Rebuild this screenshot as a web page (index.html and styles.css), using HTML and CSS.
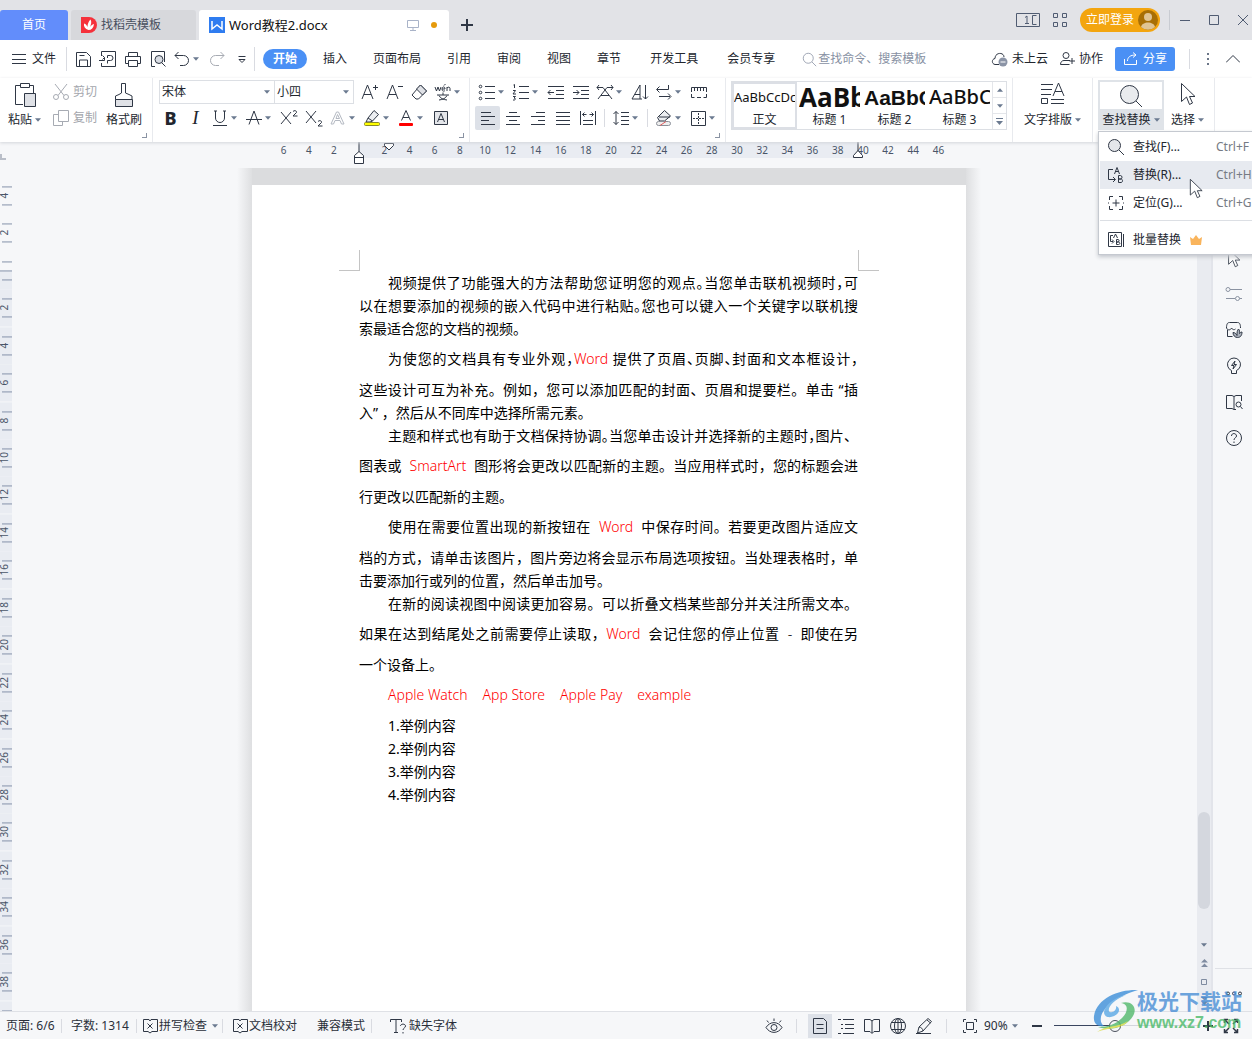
FILE: index.html
```html
<!DOCTYPE html>
<html lang="zh-CN">
<head>
<meta charset="utf-8">
<title>Word教程2.docx</title>
<link rel="stylesheet" href="styles.css">
</head>
<body>
<svg class="defs" aria-hidden="true">
  <symbol id="caret" viewBox="0 0 7 4"><path d="M0 0h7L3.5 4z" fill="#6b7a90" stroke="none"/></symbol>
  <symbol id="save" viewBox="0 0 18 18"><path d="M2.5 2.5h10l4 4v10h-14zM5.500 16v-6h8v6M5.500 5.500h5"/></symbol>
  <symbol id="export" viewBox="0 0 18 18"><path d="M2.500 6V1.500h14v15h-14V13M0 10.500h5.500V7.500M3.500 5.500l2 2-2 2M8.500 8V5.500h3a2 2 0 0 1 0 5H8.500v3"/></symbol>
  <symbol id="print" viewBox="0 0 18 18"><path d="M4.500 6V2.500h9V6M4.500 13.500h-3v-7h15v7h-3M4.500 10.500h9v6h-9z"/></symbol>
  <symbol id="preview" viewBox="0 0 18 18"><path d="M6 16.500H2.500v-15h13V12"/><circle cx="10" cy="9.500" r="4" fill="#d9dde4"/><path d="M13 13l3.500 3.500"/></symbol>
  <symbol id="undo" viewBox="0 0 18 18"><path d="M5.500 2L2 5.500 5.500 9M2 5.500h8.500a5 5 0 0 1 0 10H7"/></symbol>
  <symbol id="redo" viewBox="0 0 18 18"><path d="M12.500 2L16 5.500 12.500 9M16 5.500H7.500a5 5 0 0 0 0 10H11"/></symbol>
  <symbol id="more" viewBox="0 0 18 18"><path d="M5.500 6.500h7M6 9.500h6l-3 3z"/></symbol>
  <symbol id="search" viewBox="0 0 18 18"><circle cx="7.500" cy="7.500" r="6"/><path d="M12 12l5 5"/></symbol>
  <symbol id="cut" viewBox="0 0 18 18"><path d="M3 1l9 11.500M15 1L6 12.500"/><circle cx="4" cy="14" r="2.500"/><circle cx="14" cy="14" r="2.500"/></symbol>
  <symbol id="copy" viewBox="0 0 18 18"><path d="M6.500 1.500h10v11h-10zM6 5.500H1.500v11h9V13"/></symbol>
  <symbol id="paste" viewBox="0 0 24 26"><path d="M7 3.500H2.500v19H10M17 3.500h3.500V11M7.500 1.500h9v4h-9z"/><path d="M11.500 11.500h11v13h-11z" fill="#dfe1e6"/></symbol>
  <symbol id="brush" viewBox="0 0 24 26"><path d="M9.500 11V1.500h4V11l3.500 1.500 3 1.500v3.500H3.500V14L7 12.500z"/><path d="M3.500 17.500h17v7h-17z" fill="#dfe1e6"/></symbol>
  <symbol id="grow" viewBox="0 0 18 18"><path d="M2 16L7.500 2 13 16M4 11.500h7M13 4.500h5M15.500 2v5"/></symbol>
  <symbol id="shrink" viewBox="0 0 18 18"><path d="M2 16L7.500 2 13 16M4 11.500h7M13 3.500h5"/></symbol>
  <symbol id="eraser" viewBox="0 0 18 18"><path d="M10.500 2l6 6-8 8H6l-4-4z"/><path d="M10.500 2l6 6-4 4-6-6z" fill="#dfe1e6"/></symbol>
  <symbol id="pinyin" viewBox="0 0 18 18"><path d="M1 4l1.500 4L4 4l1.500 4L7 4M8 6h3c0-3-3-2.500-3 0s2 2.500 3 1.500M13 8V4m0 1c1-1.500 3-1 3 .5V8M10 2.500L11.500 1M9 9.500V12M3 12h12M5 12.500c1.500 3 4 4 8 4.500M13 12.500c-1.500 3-4 4-8 4.500"/></symbol>
  <symbol id="underline" viewBox="0 0 18 18"><path d="M4.500 2v7a4.500 4.500 0 0 0 9 0V2M3 2h3M12 2h3M2 16.500h14"/></symbol>
  <symbol id="strike" viewBox="0 0 18 18"><path d="M4 15.500L9 2l5 13.500M1 10.500h16"/></symbol>
  <symbol id="sup" viewBox="0 0 18 18"><path d="M1 3l10 12M11 3L1 15M13 2.500c1-1.500 4-1 3.500 1L13 7h4.500"/></symbol>
  <symbol id="sub" viewBox="0 0 18 18"><path d="M1 2l10 12M11 2L1 14M13 12.500c1-1.500 4-1 3.500 1L13 17h4.500"/></symbol>
  <symbol id="effect" viewBox="0 0 18 18"><path d="M2 15L7.500 3h2L15 15h-2.500l-1.500-3.500H6L4.500 15zM7 9.500h3.500L8.500 5.500z" stroke="#b4b9c2"/></symbol>
  <symbol id="mark" viewBox="0 0 18 18"><path d="M5 9l6-7.500 4.500 4L9.500 12zM5 9l-2 4h4l2.500-1" fill="#eceef1"/><rect x="1.500" y="13.500" width="15" height="3" rx="1" fill="#ff0" stroke="#8a8a2a"/></symbol>
  <symbol id="color" viewBox="0 0 18 18"><path d="M4.500 11.500L9 1.500l4.500 10M6 8.500h6"/><rect x="2" y="14" width="14" height="3" rx="1" fill="red" stroke="none"/></symbol>
  <symbol id="boxa" viewBox="0 0 18 18"><path d="M2.500 2.500h13v13h-13z" fill="#e4e6ea"/><path d="M5.500 13L9 4.500l3.500 8.500M6.500 10.500h5"/></symbol>
  <symbol id="bullets" viewBox="0 0 18 18"><path d="M7 3.500h10M7 9.500h10M7 15.500h10"/><circle cx="2.500" cy="3.500" r="1.300"/><circle cx="2.500" cy="9.500" r="1.300"/><circle cx="2.500" cy="15.500" r="1.300"/></symbol>
  <symbol id="numbers" viewBox="0 0 18 18"><path d="M7 3.500h10M7 9.500h10M7 15.500h10M1.500 2l1-.5V5M1 7.500h2.500L1 11h3M1 13.500h2.500l-1.500 1.500c2 0 2 2.500-1 2"/></symbol>
  <symbol id="outdent" viewBox="0 0 18 18"><path d="M1 3.500h16M9 7.500h8M9 11.500h8M1 15.500h16M7 9.500H1M3.500 7L1 9.500 3.500 12"/></symbol>
  <symbol id="indent" viewBox="0 0 18 18"><path d="M1 3.500h16M9 7.500h8M9 11.500h8M1 15.500h16M1 9.500h6M4.500 7L7 9.500 4.500 12"/></symbol>
  <symbol id="scale" viewBox="0 0 18 18"><path d="M2 16L9 7l7 9M5 12.500h8M7 4.500H1M3 2L1 4.500 3 7M11 4.500h6M15 2l2 2.500L15 7M7 4.500l2 2.500 2-2.500"/></symbol>
  <symbol id="sort" viewBox="0 0 18 18"><path d="M1 16L9 2v14M4 11.500h5M1 16h10M14.500 2v14M12 13.500l2.500 2.500 2.500-2.500"/></symbol>
  <symbol id="wrap" viewBox="0 0 18 18"><path d="M13.500 2v4.500H2M4.500 3.500l-3 3 3 3M4 13.500h11M13 10.500l3 3-3 3"/></symbol>
  <symbol id="tabs" viewBox="0 0 18 18"><path d="M1.500 9V4.500h15V9M4.500 5v3M7.500 5v3M10.500 5v3M13.500 5v3M1.500 11v3.500h3M16.500 11v3.500h-3M7 14.500h4"/></symbol>
  <symbol id="left" viewBox="0 0 18 18"><path d="M2 3.500h10M2 7.500h14M2 11.500h8M2 15.500h14"/></symbol>
  <symbol id="center" viewBox="0 0 18 18"><path d="M5 3.500h8M2 7.500h14M5 11.500h8M2 15.500h14"/></symbol>
  <symbol id="right" viewBox="0 0 18 18"><path d="M7 3.500h9M2 7.500h14M9 11.500h7M2 15.500h14"/></symbol>
  <symbol id="justify" viewBox="0 0 18 18"><path d="M2 3.500h14M2 7.500h14M2 11.500h14M2 15.500h14"/></symbol>
  <symbol id="spread" viewBox="0 0 18 18"><path d="M1.500 2v14M16.500 2v14M4 11.500h10M4 15.500h10M3.500 5.500h4M5.500 3.500l-2 2 2 2M14.500 5.500h-4M12.500 3.500l2 2-2 2"/></symbol>
  <symbol id="spacing" viewBox="0 0 18 18"><path d="M4 2.500v13M1.500 5L4 2.500 6.500 5M1.500 13L4 15.500 6.500 13M9 3.500h8M9 7.500h8M9 11.500h8M9 15.500h8"/></symbol>
  <symbol id="shade" viewBox="0 0 18 18"><path d="M9.500 1.500l6 5.500-6 5h-5l-2-3.500zM4 8h11" fill="#eceef1"/><rect x="1.500" y="12.500" width="14" height="4" rx="2" fill="#eee" stroke="#8b8f98"/><path d="M5 16.500l6-4" stroke="#e06060"/></symbol>
  <symbol id="border" viewBox="0 0 18 18"><path d="M2.500 2.500h14v14h-14z"/><path d="M9.500 4v11M4 9.500h11" stroke-dasharray="2 1"/></symbol>
  <symbol id="typeset" viewBox="0 0 26 24"><path d="M2 2.500h12M2 7.500h11M2 12.500h10M2.500 16.500h6v5h-6zM12 17.500h13M12 21.500h13M14 14l5.500-13L25 14M16 9.500h7"/></symbol>
  <symbol id="find" viewBox="0 0 24 24"><circle cx="10.500" cy="10.500" r="9" fill="#e9ebee"/><path d="M17 17l6 6"/></symbol>
  <symbol id="pointer" viewBox="0 0 16 24"><path d="M1.500 1.500v18l5-4.500 3 7.500 3-1.500-3-6.500h5.500z" fill="#fff"/></symbol>
  <symbol id="replace" viewBox="0 0 18 18"><path d="M6 3.500H1.500v10H8M6 11l2.500 2.500L6 16M7.500 8L10 1.500 12.500 8M8.500 5.500h3M11.500 9.500v7h2.500c2 0 2-3.500 0-3.500h-2.500 2c2 0 2-3.500 0-3.500z"/></symbol>
  <symbol id="locate" viewBox="0 0 18 18"><path d="M6 2.500H2.500V6M12 2.500h3.500V6M6 15.500H2.500V12M12 15.500h3.500V12M9 5.500v7M5.500 9h7M1 9h1M16 9h1"/></symbol>
  <symbol id="batch" viewBox="0 0 18 18"><path d="M1.500 1.500h13v14h-13zM16.500 3v13M6 4.500H3.500v6H6M5 8.500l2 2-2 2M6.500 7L8.500 3l2 4M9.500 8.500v5h2c2 0 1.500-2.500 0-2.500h-2 1.500c1.500 0 1.500-2.500 0-2.500z"/></symbol>
  <symbol id="sliders" viewBox="0 0 18 18"><path d="M5 4.500h12M1 13.500h9M14.500 13.500H17" stroke="#8b93a2"/><circle cx="3" cy="4.500" r="2" stroke="#8b93a2"/><circle cx="12.500" cy="13.500" r="2" stroke="#8b93a2"/></symbol>
  <symbol id="store" viewBox="0 0 18 18"><path d="M2.500 9v6.500h5M1.500 7c0-4 1-5.500 3-5.500h8c2 0 3 1.500 3 5.500M1.500 7c1 2.500 4 2.500 5 0M6.500 7c1 2 3 2 4 1"/><path d="M8 11.500c2 0 3 1 4 3 0-3 0-5 1.500-6.500 1.500 1.500 1 3 1 4.500 1-1 1.500-1.500 2.500-1.500 0 4-2 5.500-4.500 5.500S8 14.500 8 11.500z" fill="#aab0bb"/></symbol>
  <symbol id="bulb" viewBox="0 0 18 18"><path d="M6.500 16.500v-3a6.500 6.500 0 1 1 5 0v3zM10 4L6.500 8.500h2.500L8 12l3.500-4.500H9z"/></symbol>
  <symbol id="read" viewBox="0 0 18 18"><path d="M16.500 8V2.500H11L9 3.500 7 2.500H1.500v13H7l2 1V3.500M9 16.500h2"/><circle cx="13.500" cy="11.500" r="2.500"/><path d="M15.500 13.500l2 2.500"/></symbol>
  <symbol id="help" viewBox="0 0 18 18"><circle cx="9" cy="9" r="7.500"/><path d="M6.500 7c0-3.500 5-3 5 0 0 2-2.500 1.500-2.500 4M9 12.500V14"/></symbol>
  <symbol id="proof" viewBox="0 0 18 18"><path d="M8 2.500H2.500v12H7l2 1.500 2-1.500h5.500v-12H10L9 4zM6.500 6.500l5 5M11.500 6.500l-5 5"/></symbol>
  <symbol id="missing" viewBox="0 0 18 18"><path d="M1.500 5V2.500h11V5M7 2.500v13M5 15.500h4M11.500 9c0-2.500 5-2.500 5 0 0 2-2.500 2-2.500 4M14 15v1.500"/></symbol>
  <symbol id="eye" viewBox="0 0 18 18"><path d="M1 10.500c4-6.500 12-6.500 16 0-4 6.500-12 6.500-16 0zM9 4V1.500M3.500 5.500L2 3.500M14.500 5.500L16 3.500"/><circle cx="9" cy="10.500" r="3"/></symbol>
  <symbol id="pageview" viewBox="0 0 18 18"><path d="M2.500 1.500h10l3 3v12h-13zM5.500 7.500h7M5.500 11.500h7"/></symbol>
  <symbol id="outline" viewBox="0 0 18 18"><path d="M1 2.500h3M6 2.500h11M4 7.500h2M8 7.500h9M4 11.500h2M8 11.500h9M1 16.500h3M6 16.500h11"/></symbol>
  <symbol id="book" viewBox="0 0 18 18"><path d="M1.500 2.500H7L9 4l2-1.500h5.500v12H11l-2 2-2-2H1.500zM9 4v12"/></symbol>
  <symbol id="globe" viewBox="0 0 18 18"><circle cx="9" cy="9" r="7.500"/><ellipse cx="9" cy="9" rx="3.500" ry="7.500"/><path d="M9 1.500v15M2.500 5.500h13M2.500 12.500h13"/></symbol>
  <symbol id="pen" viewBox="0 0 18 18"><path d="M4 10l9-8.500 3.500 3L8 14l-5.500 2zM4 10c2 0 4 2 4 4M1 16.500h15M12 3l3.500 3"/></symbol>
  <symbol id="fit" viewBox="0 0 18 18"><path d="M5 2.500H2.500V5M13 2.500h2.500V5M5 15.500H2.500V13M13 15.500h2.500V13M5.500 5.500h7v7h-7z"/></symbol>
  <symbol id="full" viewBox="0 0 18 18"><path d="M6 2.500H2.500V6M12 2.500h3.500V6M6 15.500H2.500V12M12 15.500h3.500V12M3 3l4 4M15 3l-4 4M3 15l4-4M15 15l-4-4" stroke-width="1.500"/></symbol>
</svg>

<header class="titlebar">
  <nav class="tabs">
    <button class="tab tab-home">首页</button>
    <button class="tab tab-tpl"><svg width="16" height="16" viewBox="0 0 16 16"><path d="M0 0h8a8 8 0 0 1 0 16H0z" fill="#f5313b" stroke="none"/><path d="M7.500 13C4 12 2.500 9.500 3 6.500c2 .5 3 2 3.500 3.500C6.500 7 7.500 4.500 9.500 2.500 11 5 10 7.500 9 10c1-1.500 2-2.500 4-3-.5 4-2.500 6-5.500 6z" fill="#fff" stroke="none"/></svg>找稻壳模板</button>
    <button class="tab tab-doc"><svg width="16" height="16" viewBox="0 0 16 16"><path d="M0 0h16v16H0z" fill="#2f7cf0" stroke="none"/><path d="M3 4v8l5-4 5 4V4" stroke="#fff" stroke-width="1.500"/></svg><span>Word教程2.docx</span><svg class="screen" width="12" height="12" viewBox="0 0 12 12"><path d="M.5 1.500h11v7H.5zM6 9v2.500M3 11.500h6"/></svg><i class="dirty"></i></button>
    <button class="add" aria-label="新建"><svg width="12" height="12" viewBox="0 0 12 12"><path d="M6 0v12M0 6h12" stroke-width="2"/></svg></button>
  </nav>
  <div class="window-tools">
    <svg width="24" height="14" viewBox="0 0 24 14"><path d="M.5.5h23v13H.5zM20.500 2.500h-4v9h4M9 4.500L11 3v7.500M9 10.500h4"/></svg>
    <svg width="14" height="14" viewBox="0 0 14 14"><path d="M.5.500h4v4h-4zM9.500.500h4v4h-4zM.5 9.500h4v4h-4zM9.500 9.500h4v4h-4z"/></svg>
    <button class="login">立即登录<svg width="20" height="20" viewBox="0 0 20 20"><circle cx="10" cy="10" r="10" fill="#a86f05" stroke="none"/><circle cx="10" cy="7" r="4" fill="#e0c493" stroke="none"/><path d="M3 17c1-6 13-6 14 0a10 10 0 0 1-14 0z" fill="#e0c493" stroke="none"/></svg></button>
    <i class="vr"></i>
    <svg width="10" height="10" viewBox="0 0 10 10"><path d="M0 5.500h10"/></svg>
    <svg width="10" height="10" viewBox="0 0 10 10"><path d="M.5.500h9v9h-9z"/></svg>
    <svg width="10" height="10" viewBox="0 0 10 10"><path d="M0 0l10 10M10 0L0 10"/></svg>
  </div>
</header>

<div class="menubar">
  <button class="file"><svg width="14" height="12" viewBox="0 0 14 12"><path d="M0 1.500h14M0 6.500h14M0 10.500h14"/></svg>文件</button>
  <i class="vr"></i>
  <button class="btn" aria-label="保存"><svg class="ic"><use href="#save"/></svg></button>
  <button class="btn" aria-label="输出为PDF"><svg class="ic"><use href="#export"/></svg></button>
  <button class="btn" aria-label="打印"><svg class="ic"><use href="#print"/></svg></button>
  <button class="btn" aria-label="打印预览"><svg class="ic"><use href="#preview"/></svg></button>
  <button class="btn split" aria-label="撤销"><svg class="ic"><use href="#undo"/></svg><svg class="caret"><use href="#caret"/></svg></button>
  <button class="btn dim" aria-label="恢复"><svg class="ic"><use href="#redo"/></svg></button>
  <button class="btn" aria-label="更多"><svg class="ic"><use href="#more"/></svg></button>
  <i class="vr"></i>
  <nav class="menus">
    <button class="current">开始</button><button>插入</button><button>页面布局</button><button>引用</button><button>审阅</button><button>视图</button><button>章节</button><button class="far">开发工具</button><button class="far">会员专享</button>
  </nav>
  <label class="search"><svg width="15" height="15"><use href="#search"/></svg><input type="text" placeholder="查找命令、搜索模板" aria-label="查找命令"></label>
  <div class="account">
    <button><svg width="17" height="16" viewBox="0 0 17 16"><path d="M8 13.500H4C.5 13 .5 8 4 7.500 4 1 13 1 13 6"/><circle cx="12" cy="11" r="4.500" fill="#8b94a6" stroke="none"/><path d="M9.500 11h5" stroke="#fff"/></svg>未上云</button>
    <button><svg width="15" height="16" viewBox="0 0 15 16"><circle cx="6" cy="4.500" r="3"/><path d="M10 9.500H4c-2 0-3.500 1.500-3.500 4h9M12 7v6M9.500 10h5.500"/></svg>协作</button>
    <button class="share"><svg width="14" height="14" viewBox="0 0 14 14"><path d="M.5 7v5.500h12V8M3.500 9c0-4 3-6 8-6M9 .500L12 3 9 5.500"/></svg>分享</button>
    <i class="vr"></i>
    <svg width="4" height="14" viewBox="0 0 4 14"><path d="M1 1h2v2H1zM1 6h2v2H1zM1 11h2v2H1z" fill="#6b7688" stroke="none"/></svg>
    <svg width="14" height="8" viewBox="0 0 14 8"><path d="M0 7.500l7-7 7 7"/></svg>
  </div>
</div>

<div class="ribbon">
  <section class="group clip">
    <button class="big"><svg width="24" height="26"><use href="#paste"/></svg><span>粘贴<svg class="caret"><use href="#caret"/></svg></span></button>
    <div class="stack">
      <button class="text dim"><svg class="ic"><use href="#cut"/></svg>剪切</button>
      <button class="text dim"><svg class="ic"><use href="#copy"/></svg>复制</button>
    </div>
    <button class="big"><svg width="24" height="26"><use href="#brush"/></svg><span>格式刷</span></button>
    <i class="launch"></i>
  </section>
  <section class="group font">
    <div class="row">
      <div class="pick pick-font"><select aria-label="字体"><option>宋体</option></select><svg class="caret"><use href="#caret"/></svg></div>
      <div class="pick pick-size"><select aria-label="字号"><option>小四</option></select><svg class="caret"><use href="#caret"/></svg></div>
      <span class="tools">
        <button class="btn" aria-label="增大字号"><svg class="ic"><use href="#grow"/></svg></button>
        <button class="btn" aria-label="减小字号"><svg class="ic"><use href="#shrink"/></svg></button>
        <button class="btn" aria-label="清除格式"><svg class="ic"><use href="#eraser"/></svg></button>
        <button class="btn split" aria-label="拼音指南"><svg class="ic"><use href="#pinyin"/></svg><svg class="caret"><use href="#caret"/></svg></button>
      </span>
    </div>
    <div class="row">
      <button class="btn bold">B</button>
      <button class="btn italic">I</button>
      <button class="btn split" aria-label="下划线"><svg class="ic"><use href="#underline"/></svg><svg class="caret"><use href="#caret"/></svg></button>
      <button class="btn split" aria-label="删除线"><svg class="ic"><use href="#strike"/></svg><svg class="caret"><use href="#caret"/></svg></button>
      <button class="btn" aria-label="上标"><svg class="ic"><use href="#sup"/></svg></button>
      <button class="btn" aria-label="下标"><svg class="ic"><use href="#sub"/></svg></button>
      <button class="btn split" aria-label="文字效果"><svg class="ic"><use href="#effect"/></svg><svg class="caret"><use href="#caret"/></svg></button>
      <button class="btn split" aria-label="突出显示"><svg class="ic"><use href="#mark"/></svg><svg class="caret"><use href="#caret"/></svg></button>
      <button class="btn split" aria-label="字体颜色"><svg class="ic"><use href="#color"/></svg><svg class="caret"><use href="#caret"/></svg></button>
      <button class="btn" aria-label="字符底纹"><svg class="ic"><use href="#boxa"/></svg></button>
    </div>
    <i class="launch"></i>
  </section>
  <section class="group para">
    <div class="row">
      <button class="btn split" aria-label="项目符号"><svg class="ic"><use href="#bullets"/></svg><svg class="caret"><use href="#caret"/></svg></button>
      <button class="btn split" aria-label="编号"><svg class="ic"><use href="#numbers"/></svg><svg class="caret"><use href="#caret"/></svg></button>
      <button class="btn" aria-label="减少缩进"><svg class="ic"><use href="#outdent"/></svg></button>
      <button class="btn" aria-label="增加缩进"><svg class="ic"><use href="#indent"/></svg></button>
      <button class="btn split" aria-label="中文版式"><svg class="ic"><use href="#scale"/></svg><svg class="caret"><use href="#caret"/></svg></button>
      <button class="btn" aria-label="排序"><svg class="ic"><use href="#sort"/></svg></button>
      <button class="btn split" aria-label="显示段落标记"><svg class="ic"><use href="#wrap"/></svg><svg class="caret"><use href="#caret"/></svg></button>
      <button class="btn" aria-label="制表位"><svg class="ic"><use href="#tabs"/></svg></button>
    </div>
    <div class="row">
      <button class="btn on" aria-label="左对齐"><svg class="ic"><use href="#left"/></svg></button>
      <button class="btn" aria-label="居中"><svg class="ic"><use href="#center"/></svg></button>
      <button class="btn" aria-label="右对齐"><svg class="ic"><use href="#right"/></svg></button>
      <button class="btn" aria-label="两端对齐"><svg class="ic"><use href="#justify"/></svg></button>
      <button class="btn" aria-label="分散对齐"><svg class="ic"><use href="#spread"/></svg></button>
      <i class="vr"></i>
      <button class="btn split" aria-label="行距"><svg class="ic"><use href="#spacing"/></svg><svg class="caret"><use href="#caret"/></svg></button>
      <i class="vr"></i>
      <button class="btn split" aria-label="底纹颜色"><svg class="ic"><use href="#shade"/></svg><svg class="caret"><use href="#caret"/></svg></button>
      <button class="btn split" aria-label="边框"><svg class="ic"><use href="#border"/></svg><svg class="caret"><use href="#caret"/></svg></button>
    </div>
    <i class="launch"></i>
  </section>
  <section class="group styles">
    <div class="gallery">
      <button class="style chosen"><b class="s0">AaBbCcDc</b><span>正文</span></button>
      <button class="style"><b class="s1">AaBb</b><span>标题 1</span></button>
      <button class="style"><b class="s2">AaBbC</b><span>标题 2</span></button>
      <button class="style"><b class="s3">AaBbC</b><span>标题 3</span></button>
      <div class="scroller"><button aria-label="上一行"><svg class="tiny flip"><use href="#caret"/></svg></button><button aria-label="下一行"><svg class="tiny"><use href="#caret"/></svg></button><button aria-label="全部样式"><svg width="7" height="7" viewBox="0 0 7 7"><path d="M0 .500h7" stroke="#6b7a90"/><path d="M0 3h7L3.500 7z" fill="#6b7a90" stroke="none"/></svg></button></div>
    </div>
  </section>
  <section class="group layout">
    <button class="big"><svg width="26" height="24"><use href="#typeset"/></svg><span>文字排版<svg class="caret"><use href="#caret"/></svg></span></button>
  </section>
  <section class="group edit">
    <div class="findwrap">
      <button class="big find"><i class="lens"><svg width="24" height="24"><use href="#find"/></svg></i><span>查找替换<svg class="caret"><use href="#caret"/></svg></span></button>
      <div class="menu" role="menu">
        <button role="menuitem"><svg class="ic glass"><use href="#search"/></svg><span>查找(F)...</span><kbd>Ctrl+F</kbd></button>
        <button role="menuitem" class="hover"><svg class="ic"><use href="#replace"/></svg><span>替换(R)...</span><kbd>Ctrl+H</kbd></button>
        <button role="menuitem"><svg class="ic"><use href="#locate"/></svg><span>定位(G)...</span><kbd>Ctrl+G</kbd></button>
        <hr>
        <button role="menuitem"><svg class="ic"><use href="#batch"/></svg><span>批量替换</span><svg class="crown" width="12" height="10" viewBox="0 0 12 10"><path d="M0 2l3 2 3-4 3 4 3-2-1 8H1z" fill="#f9b45c" stroke="none"/></svg></button>
        <svg class="mouse" width="14" height="21"><use href="#pointer"/></svg>
      </div>
    </div>
    <button class="big"><svg width="16" height="24"><use href="#pointer"/></svg><span>选择<svg class="caret"><use href="#caret"/></svg></span></button>
  </section>
</div>

<main class="work">
  <div class="desk">
    <div class="ruler">
      <i class="corner"></i>
      <ol>
        <li>6<li>4<li>2<li><li>2<li>4<li>6<li>8<li>10<li>12<li>14<li>16<li>18<li>20<li>22<li>24<li>26<li>28<li>30<li>32<li>34<li>36<li>38<li>40<li>42<li>44<li>46
        <svg class="first" width="12" height="8" viewBox="0 0 12 8"><path d="M1.500 .500h9v2L6 7l-4.500-4.500z" fill="#fff"/></svg>
        <svg class="hang" width="10" height="22" viewBox="0 0 10 22"><path d="M5 0v10"/><path d="M.500 21.500v-8L5 9.500l4.500 4v8zM.500 15.500h9" fill="#fff"/></svg>
        <svg class="rind" width="10" height="16" viewBox="0 0 10 16"><path d="M5 0v10"/><path d="M.500 15.500v-2L5 8.500l4.500 5v2z" fill="#fff"/></svg>
      </ol>
    </div>
    <div class="canvas">
      <ol class="vruler">
        <li>4<li>2<li class="zero"><li>2<li>4<li>6<li>8<li>10<li>12<li>14<li>16<li>18<li>20<li>22<li>24<li>26<li>28<li>30<li>32<li>34<li>36<li>38<li>40
      </ol>
      <div class="sheet">
        <article class="paper">
          <div class="crops"><i></i><i></i></div>
          <div class="body">
            <p><span class="ln in">视频提供了功能强大的方法帮助您证明您的观点<s>。</s>当您单击联机视频时<s>，</s>可</span><span class="ln">以在想要添加的视频的嵌入代码中进行粘贴<s>。</s>您也可以键入一个关键字以联机搜</span><span class="ln end">索最适合您的文档的视频。</span></p>
            <p><span class="ln in tall">为使您的文档具有专业外观<s>，</s><em>Word</em> 提供了页眉<s>、</s>页脚<s>、</s>封面和文本框设计<s>，</s></span><span class="ln">这些设计可互为补充。例如，您可以添加匹配的封面、页眉和提要栏。单击 “插</span><span class="ln end">入” ，然后从不同库中选择所需元素。</span></p>
            <p><span class="ln in">主题和样式也有助于文档保持协调<s>。</s>当您单击设计并选择新的主题时<s>，</s>图片、</span><span class="ln tall">图表或 <em class="pad">SmartArt</em> 图形将会更改以匹配新的主题。当应用样式时，您的标题会进</span><span class="ln end">行更改以匹配新的主题。</span></p>
            <p><span class="ln in tall">使用在需要位置出现的新按钮在 <em class="pad">Word</em> 中保存时间。若要更改图片适应文</span><span class="ln">档的方式，请单击该图片，图片旁边将会显示布局选项按钮。当处理表格时，单</span><span class="ln end">击要添加行或列的位置，然后单击加号。</span></p>
            <p><span class="ln in">在新的阅读视图中阅读更加容易。可以折叠文档某些部分并关注所需文本。</span><span class="ln tall">如果在达到结尾处之前需要停止读取，<em class="after">Word</em> 会记住您的停止位置 <em class="dash">-</em> 即使在另</span><span class="ln end">一个设备上。</span></p>
            <p class="ln in tall end names"><em>Apple Watch</em><em>App Store</em><em>Apple Pay</em><em>example</em></p>
            <p class="ln in end">1.举例内容</p>
            <p class="ln in end">2.举例内容</p>
            <p class="ln in end">3.举例内容</p>
            <p class="ln in end">4.举例内容</p>
          </div>
        </article>
      </div>
    </div>
  </div>
  <div class="scroll">
    <i class="thumb"></i>
    <svg class="tiny"><use href="#caret"/></svg>
    <svg width="7" height="8" viewBox="0 0 7 8"><path d="M0 3.500L3.500 0 7 3.500zM0 8l3.500-3.500L7 8z" fill="#7f8ba0" stroke="none"/></svg>
    <svg width="6" height="6" viewBox="0 0 6 6"><path d="M.5.500h5v5h-5z" stroke="#7f8ba0"/></svg>
    <svg width="7" height="8" viewBox="0 0 7 8"><path d="M0 0h7L3.500 3.500zM0 4.500h7L3.500 8z" fill="#7f8ba0" stroke="none"/></svg>
  </div>
  <aside class="side">
    <button aria-label="选择"><svg width="14" height="20"><use href="#pointer"/></svg></button>
    <button aria-label="属性"><svg class="ic"><use href="#sliders"/></svg></button>
    <button aria-label="稻壳"><svg class="ic"><use href="#store"/></svg></button>
    <button aria-label="推荐"><svg class="ic"><use href="#bulb"/></svg></button>
    <button aria-label="查阅"><svg class="ic"><use href="#read"/></svg></button>
    <button aria-label="帮助"><svg class="ic"><use href="#help"/></svg></button>
    <button class="dots" aria-label="更多"><svg width="16" height="5" viewBox="0 0 16 5"><circle cx="2" cy="2.500" r="1.500"/><circle cx="8" cy="2.500" r="1.500"/><circle cx="14" cy="2.500" r="1.500"/></svg></button>
  </aside>
</main>

<footer class="status">
  <span class="page-no">页面: 6/6</span><i class="vr"></i>
  <span class="words">字数: 1314</span><i class="vr"></i>
  <button class="spell"><svg class="ic"><use href="#proof"/></svg>拼写检查<svg class="caret"><use href="#caret"/></svg></button><i class="vr"></i>
  <button class="check"><svg class="ic"><use href="#proof"/></svg>文档校对</button>
  <span class="compat">兼容模式</span><i class="vr"></i>
  <button class="missing"><svg class="ic"><use href="#missing"/></svg>缺失字体</button>
  <div class="views">
    <button aria-label="护眼模式"><svg class="ic"><use href="#eye"/></svg></button>
    <i class="vr wide"></i>
    <button class="on" aria-label="页面视图"><svg class="ic"><use href="#pageview"/></svg></button>
    <button aria-label="大纲"><svg class="ic"><use href="#outline"/></svg></button>
    <button aria-label="阅读版式"><svg class="ic"><use href="#book"/></svg></button>
    <button aria-label="Web版式"><svg class="ic"><use href="#globe"/></svg></button>
    <button aria-label="写作模式"><svg class="ic"><use href="#pen"/></svg></button>
    <i class="vr wide"></i>
    <button aria-label="适合页面"><svg class="ic"><use href="#fit"/></svg></button>
    <button class="pct">90%<svg class="caret"><use href="#caret"/></svg></button>
    <button class="step" aria-label="缩小"><svg width="10" height="10" viewBox="0 0 10 10"><path d="M0 5h10" stroke-width="2"/></svg></button>
    <input type="range" min="0" max="100" value="41" aria-label="缩放">
    <button class="step" aria-label="放大"><svg width="10" height="10" viewBox="0 0 10 10"><path d="M0 5h10M5 0v10" stroke-width="2"/></svg></button>
    <button aria-label="全屏"><svg class="ic"><use href="#full"/></svg></button>
  </div>
</footer>

<div class="watermark">
  <svg width="46" height="44" viewBox="0 0 46 44">
    <path d="M45 1C28 0 4 8 1 27c-1 8 4 11 10 10C3 32 8 12 45 1z" fill="#3d8fd9" stroke="none"/>
    <path d="M33 6C20 9 11 17 11 24c1 6 10 5 14 0 2-3 1-6-2-7 1 4-3 7-6 6-4-2 2-12 16-17z" fill="#5aa9e6" stroke="none"/>
    <path d="M28 14c8 1 7 9 1 15-6 6-14 9-24 9 14 5 31-1 36-13 3-8-4-14-13-11z" fill="#52b96b" stroke="none"/>
    <path d="M4 43c10-7 20-4 31-11-6 9-20 6-31 11z" fill="#d8dc3f" stroke="none"/>
  </svg>
  <div><strong>极光下载站</strong><span>www.xz7.com</span></div>
</div>
</body>
</html>
```
FILE: styles.css
```css
* { box-sizing: border-box; }
html, body { height: 100%; }
body {
  margin: 0;
  display: flex;
  flex-direction: column;
  overflow: hidden;
  position: relative;
  background: #f6f7f9;
  color: #22262e;
  font: 12px/16px "Noto Sans", "Noto Sans CJK SC", sans-serif;
}
button, select, input { font: inherit; color: inherit; }
button { border: 0; padding: 0; background: none; white-space: nowrap; }
ol { list-style: none; margin: 0; padding: 0; }
svg { display: block; flex: none; fill: none; stroke: #2f3745; }
.defs { position: absolute; width: 0; height: 0; }
.ic { width: 18px; height: 18px; }
.caret { width: 6px; height: 4px; }
.tiny { width: 6px; height: 4px; }
.flip { transform: rotate(180deg); }
.vr { flex: none; width: 1px; height: 24px; background: #d9dbe1; }

/* title bar */
.titlebar { flex: none; height: 40px; display: flex; justify-content: space-between; background: #e2e3e7; }
.tabs { display: flex; align-items: flex-end; gap: 3px; }
.tab { height: 30px; display: flex; align-items: center; border-radius: 3px 3px 0 0; }
.tab-home { width: 68px; justify-content: center; background: #628dfb; color: #fff; }
.tab-tpl { width: 125px; padding-left: 10px; gap: 4px; background: #d7d8dc; color: #474f5e; }
.tab-doc { width: 250px; padding: 0 12px 0 10px; gap: 4px; background: #fff; color: #111; font-size: 13px; }
.tab-doc span { flex: 1; text-align: left; }
.screen { stroke: #a9b3c8; }
.dirty { width: 6px; height: 6px; margin: 0 0 0 8px; border-radius: 50%; background: #e59a0c; }
.add { height: 30px; padding: 0 9px; }
.window-tools { display: flex; align-items: center; gap: 19px; padding-right: 4px; }
.window-tools svg { stroke: #505c72; }
.window-tools > svg:nth-of-type(2) { margin: 0 -6px; }
.login { width: 80px; height: 24px; display: flex; align-items: center; justify-content: space-between; padding: 0 2px 0 6px; border-radius: 12px; background: #f3a50f; color: #fff; }
.window-tools .vr { height: 20px; margin: 0 -9px 0 -10px; background: #c9ccd2; }

/* menu bar */
.menubar { flex: none; height: 38px; display: flex; align-items: center; background: #fff; }
.file { display: flex; align-items: center; gap: 6px; padding: 0 10px 0 12px; }
.menubar > .vr { margin-right: 3px; }
.menubar > .vr ~ .vr { margin-right: 8px; }
.btn { flex: none; width: 25px; height: 24px; display: flex; align-items: center; justify-content: center; border-radius: 2px; }
.split { width: 34px; justify-content: flex-start; gap: 2px; padding-left: 3px; }
.on { background: #dde1e8; }
.dim, .dim svg { color: #a3a6ac; stroke: #a7abb3; }
.menus { display: flex; align-items: center; gap: 26px; }
.menus .current { height: 20px; margin-right: -10px; padding: 0 10px; border-radius: 10px; background: #4a90f5; color: #fff; font-weight: 700; }
.menus .far { margin-left: 3px; }
.search { display: flex; align-items: center; gap: 1px; margin-left: 27px; color: #8891a3; }
.search svg { stroke: #8f98a8; }
.search input { width: 120px; padding: 0; border: 0; background: none; }
.search input::placeholder { color: #8891a3; }
.account { margin-left: auto; display: flex; align-items: center; gap: 12px; padding-right: 10px; }
.account button { display: flex; align-items: center; gap: 4px; }
.account .share { height: 24px; padding: 0 8px 0 9px; gap: 5px; border-radius: 3px; background: #4a90f5; color: #fff; }
.share svg { stroke: #fff; }
.account > svg, .account .vr { margin: 0 2px; }
.account .vr { height: 20px; }

/* ribbon */
.ribbon { flex: none; height: 64px; display: flex; position: relative; z-index: 2; background: #fff; box-shadow: 0 1px 3px #d3d5da; }
.group { position: relative; display: flex; flex: none; padding-top: 2px; border-right: 1px solid #e8eaee; }
.launch { position: absolute; right: 5px; bottom: 4px; width: 5px; height: 5px; border: solid #8a93a3; border-width: 0 1px 1px 0; }
.row { display: flex; align-items: center; height: 24px; }
.font, .para { flex-direction: column; gap: 2px; }
.big { display: flex; flex-direction: column; align-items: center; height: 50px; padding-top: 2px; }
.big span { display: flex; align-items: center; gap: 3px; margin-top: auto; line-height: 20px; }
.clip { width: 153px; padding-left: 8px; }
.stack { display: flex; flex-direction: column; gap: 2px; margin: 0 9px 0 11px; }
.text { height: 24px; display: flex; align-items: center; gap: 3px; }
.font { width: 317px; padding-left: 6px; }
.font .row + .row { margin-left: -1px; }
.pick { position: relative; display: flex; align-items: center; height: 24px; border: 1px solid #dcdfe4; }
.pick-font { width: 116px; }
.pick-size { width: 80px; margin-left: -1px; }
.pick select { width: 100%; height: 22px; padding: 0 0 0 2px; border: 0; appearance: none; background: none; }
.pick .caret { position: absolute; right: 4px; top: 9px; }
.tools { display: flex; margin-left: 2px; }
.bold { font-weight: 800; font-size: 18px; }
.italic { font: italic 19px "Liberation Serif", serif; }
.para { width: 256px; padding-left: 5px; }
.para .vr { height: 18px; margin: 0 4px; }
.styles { width: 287px; padding: 3px 0 0 5px; }
.gallery { display: flex; width: 276px; height: 49px; border: 1px solid #dcdfe4; }
.style { width: 65px; height: 47px; display: flex; flex-direction: column; align-items: center; overflow: hidden; }
.style b { width: 61px; height: 29px; overflow: hidden; text-align: left; font-weight: 400; color: #111; }
.style span { line-height: 18px; }
.chosen { box-shadow: inset 0 0 0 2px #dcdfe5; }
.style .s0 { font-size: 13px; line-height: 30px; }
.style .s1 { font: 700 26px/30px "Open Sans", sans-serif; }
.style .s2 { font: 700 21px/32px "Liberation Sans", sans-serif; }
.style .s3 { font: 500 20px/30px "Noto Sans", sans-serif; }
.scroller { flex: 1; display: flex; flex-direction: column; border-left: 1px solid #e4e6ea; }
.scroller button { flex: 1; display: grid; place-items: center; border-top: 1px solid #e4e6ea; }
.scroller button:first-child { border-top: 0; }
.layout { width: 80px; justify-content: center; }
.edit { width: 122px; padding-left: 5px; gap: 7px; }
.findwrap { position: relative; height: 50px; }
.find { width: 66px; padding: 0; background: #dfe3e8; }
.lens { display: grid; place-items: center; width: 66px; height: 29px; border: 2px solid #dfe3e8; border-bottom: 0; background: #fff; }

/* find and replace menu */
.menu { position: absolute; left: 0; top: 51px; width: 170px; height: 124px; padding: 1px; display: flex; flex-direction: column; border: 1px solid #c5c9d0; background: #fff; box-shadow: 0 2px 4px #c3c6cc; }
.menu button { flex: none; height: 28px; display: flex; align-items: center; padding-left: 7px; }
.menu span { width: 83px; margin-left: 8px; text-align: left; }
.menu kbd { font: inherit; color: #767b84; }
.menu .hover { background: #e7eaf0; }
.menu hr { width: 100%; margin: 3px 0 5px; border: 0; border-top: 1px solid #dcdfe4; }
.menu .crown { margin-left: -26px; }
.glass { fill: #e4e6ea; }
.mouse { position: absolute; left: 90px; top: 46px; }

/* work area */
.work { flex: 1; min-height: 0; display: flex; }
.desk { flex: 1; min-width: 0; display: flex; flex-direction: column; }
.ruler { flex: none; height: 16px; display: flex; justify-content: center; position: relative; padding-left: 21px; }
.corner { position: absolute; left: 0; top: 12px; width: 6px; height: 6px; border: solid #b9bec8; border-width: 0 0 2px 2px; }
.ruler ol { position: relative; width: 714px; display: flex; padding: 0 15px 0 19px; background: linear-gradient(90deg, transparent 107px, #e9ecf2 107px, #e9ecf2 606px, transparent 606px); }
.ruler li { flex: 1; min-width: 0; text-align: center; font-size: 10px; color: #4a5568; }
.first, .hang, .rind { position: absolute; top: 0; }
.first { left: 131px; top: 1px; }
.hang { left: 102px; }
.rind { left: 601px; }
.canvas { flex: 1; min-height: 0; display: flex; overflow: hidden; }
.vruler { flex: none; width: 12px; height: 861px; margin-top: 19px; display: grid; grid-template-columns: 12px; grid-auto-rows: 1fr; }
.vruler li { display: flex; align-items: center; justify-content: center; writing-mode: vertical-rl; transform: rotate(180deg); font-size: 10px; line-height: 8px; color: #4a5568; padding-left: 4px; background: linear-gradient(#8592aa, #8592aa) 0 25% / 10px 1px no-repeat, linear-gradient(#8592aa, #8592aa) 0 75% / 10px 1px no-repeat; }
.vruler li:nth-child(n+4) { background-color: #e9ecf2; }
.vruler .zero { background: linear-gradient(#8592aa, #8592aa) 0 25% / 10px 1px no-repeat, linear-gradient(#8592aa, #8592aa) 0 75% / 10px 1px no-repeat, linear-gradient(#8592aa, #8592aa) 0 50% / 12px 1px no-repeat, linear-gradient(#e9ecf2 50%, transparent 50%); }
.sheet { flex: 1; display: flex; justify-content: center; padding: 10px 0 0 9px; }
.sheet::before, .sheet::after { content: ""; width: 15px; background: linear-gradient(90deg, #f6f7f9, #dedfe1); }
.sheet::after { background: linear-gradient(90deg, #dedfe1, #f6f7f9); }
.paper { flex: none; width: 714px; border-top: 17px solid #dbdcde; background: #fff; padding-top: 65px; }
.crops { display: flex; justify-content: space-between; margin: 0 87px; }
.crops i { width: 21px; height: 21px; border: solid #c4c4c4; border-width: 0 1px 1px 0; }
.crops i + i { border-width: 0 0 1px 1px; }
.body { padding: 0 108px 0 107px; font-size: 14px; color: #000; }
.body p { margin: 0; }
.ln { display: block; height: 23px; line-height: 23px; white-space: nowrap; text-align: justify; text-align-last: justify; }
.tall { height: 38px; line-height: 38px; }
.in { padding-left: 29px; }
.end { text-align-last: left; }
.ln s { text-decoration: none; font-feature-settings: "halt"; }
.ln em { font-style: normal; font-size: 14px; font-weight: 300; color: #ff0000; }
.ln .pad { margin: 0 4px; }
.ln .after { margin-right: 4px; }
.ln .dash { margin: 0 4px; color: #000; }
.names { display: flex; gap: 15px; }

/* scroll bar and side panel */
.scroll { flex: none; width: 16px; display: flex; flex-direction: column; align-items: center; justify-content: flex-end; gap: 12px; padding-bottom: 6px; background: #e9ebf0; border-right: 2px solid #e2e4ea; }
.thumb { width: 12px; height: 97px; margin-bottom: 22px; border-radius: 6px; background: #d4d7de; }
.side { flex: none; width: 39px; display: flex; flex-direction: column; padding: 98px 0 0 2px; }
.side button { flex: none; height: 36px; display: grid; place-items: center; }
.side .dots { margin-top: auto; height: 43px; border-top: 1px solid #dfe1e6; padding-top: 6px; }

/* status bar */
.status { flex: none; height: 28px; display: flex; align-items: center; border-top: 1px solid #dfe1e6; color: #2a2f39; }
.status button { display: flex; align-items: center; justify-content: center; }
.status .vr { height: 14px; }
.page-no { width: 61px; padding-left: 6px; }
.words { width: 74px; padding-left: 9px; }
.spell { width: 85px; }
.spell .caret { margin-left: 5px; }
.check { width: 82px; }
.compat { width: 66px; padding-left: 12px; }
.missing { width: 102px; gap: 2px; }
.views { margin-left: auto; display: flex; align-items: center; padding-right: 7px; }
.views button { width: 24px; height: 24px; margin-right: 2px; }
.views .wide { margin: 0 11px 0 8px; }
.views .pct { width: 42px; gap: 4px; justify-content: flex-start; }
.views .step { width: 18px; }
.views input { width: 145px; height: 14px; margin: 0 0 0 6px; appearance: none; background: linear-gradient(90deg, #3a4660 42%, #d3d6dd 42%) center / 100% 1px no-repeat; }
.views input::-webkit-slider-thumb { appearance: none; width: 12px; height: 12px; border: 1px solid #4a505c; border-radius: 50%; background: #f6f7f9; }

/* site mark */
.watermark { position: absolute; right: 10px; bottom: 6px; display: flex; align-items: center; opacity: .8; pointer-events: none; }
.watermark div { display: flex; flex-direction: column; margin-left: -2px; }
.watermark strong { font-size: 21px; line-height: 24px; color: #4a8fd6; }
.watermark span { font: 700 16px/20px "Liberation Sans", sans-serif; color: #4cba6a; }
```
